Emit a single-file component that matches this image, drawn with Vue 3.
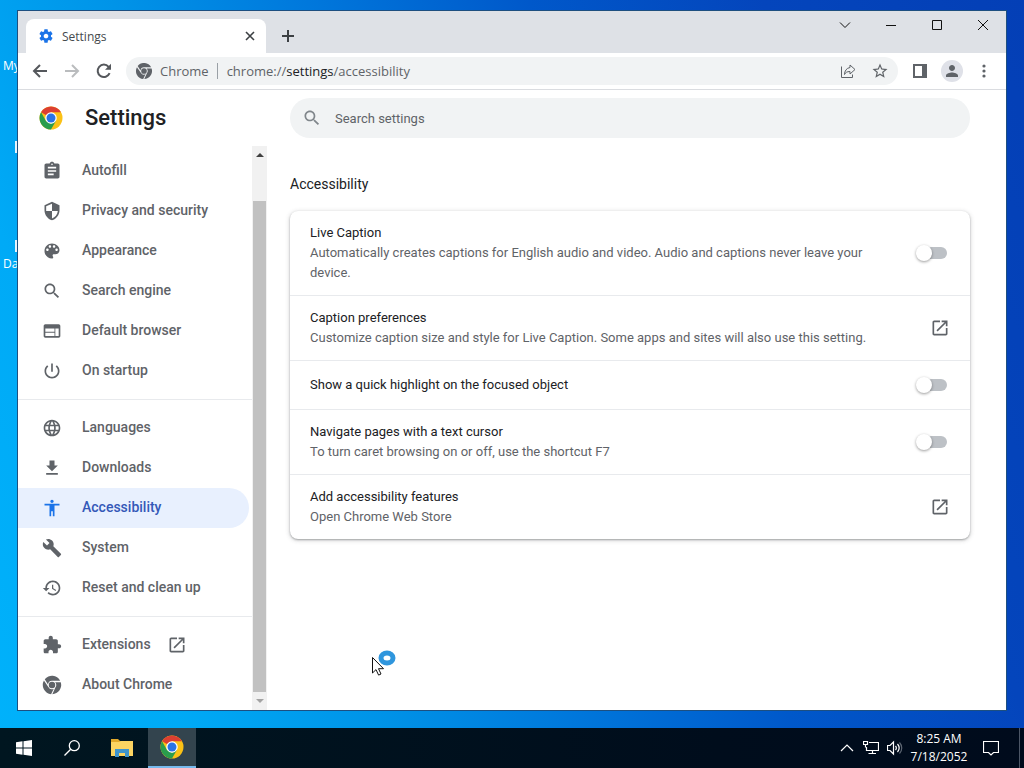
<template>
  <div class="desktop">
    <span class="desktop-label label-top">My</span>
    <span class="desktop-label label-bottom">Da</span>
    <span class="shortcut shortcut-top"></span>
    <span class="shortcut shortcut-bottom"></span>

    <div class="workspace">
      <div class="window">
        <header class="tab-strip">
          <div class="tab">
            <svg class="tab-icon" viewBox="0 0 24 24">
              <path :d="icons.gear" />
            </svg>
            <span class="tab-title">Settings</span>
            <button class="tab-close" aria-label="Close tab">
              <svg viewBox="0 0 10 10"><path d="M1 1l8 8M9 1l-8 8" /></svg>
            </button>
          </div>
          <button class="new-tab" aria-label="New tab">
            <svg viewBox="0 0 14 14"><path d="M7 1v12M1 7h12" /></svg>
          </button>
          <div class="caption-buttons">
            <button v-for="button in captionButtons" :key="button.label" :aria-label="button.label">
              <svg viewBox="0 0 12 12"><path :d="button.path" /></svg>
            </button>
          </div>
        </header>

        <div class="toolbar">
          <button class="nav-btn" aria-label="Back">
            <svg viewBox="0 0 16 16"><path d="M15 8H2M8 2L2 8l6 6" /></svg>
          </button>
          <button class="nav-btn muted" aria-label="Forward">
            <svg viewBox="0 0 16 16"><path d="M1 8h13M8 2l6 6-6 6" /></svg>
          </button>
          <button class="nav-btn" aria-label="Reload">
            <svg viewBox="0 0 16 16">
              <path d="M13.6 10.2A6.2 6.2 0 1 1 12.6 3.8L14 5.4" />
              <path class="solid" d="M15 .8v6H9z" />
            </svg>
          </button>
          <div class="omnibox">
            <svg class="site-icon" viewBox="1 1 22 22"><path :d="icons.chrome" /></svg>
            <span class="site-name">Chrome</span>
            <span class="url">chrome://<b>settings</b>/accessibility</span>
            <button class="box-btn" aria-label="Share this page">
              <svg viewBox="0 0 16 16">
                <path d="M1.5 3.5v11h11v-3" />
                <path d="M10 2l5 4.5-5 4.5V8.5c-3 0-4.500 1-5.500 3 0-3.500 2-6.500 5.500-7z" />
              </svg>
            </button>
            <button class="box-btn star" aria-label="Bookmark this tab">
              <svg viewBox="0 0 24 24"><path :d="icons.star" /></svg>
            </button>
          </div>
          <button class="tool-btn" aria-label="Side panel">
            <svg viewBox="0 0 14 14"><path d="M0 0h14v14H0zM2 2v10h7V2z" fill-rule="evenodd" /></svg>
          </button>
          <button class="tool-btn avatar" aria-label="Profile">
            <svg viewBox="4 4 16 16"><path :d="icons.person" /></svg>
          </button>
          <button class="tool-btn" aria-label="Menu">
            <svg viewBox="0 0 14 14">
              <circle cx="7" cy="2" r="1.6" /><circle cx="7" cy="7" r="1.6" /><circle cx="7" cy="12" r="1.6" />
            </svg>
          </button>
        </div>

        <div class="settings-header">
          <div class="brand">
            <svg class="chrome-logo" viewBox="0 0 48 48">
              <circle cx="24" cy="24" r="23" fill="#fbc116" />
              <path d="M24 24L4.1 12.5A23 23 0 0 1 43.9 12.5H24z" fill="#dc3f31" />
              <path d="M4.1 12.5A23 23 0 0 0 24 47l10-17.3L24 35.5l-10-5.700z" fill="#2a9d4d" />
              <circle cx="24" cy="24" r="11.5" fill="#fff" />
              <circle cx="24" cy="24" r="9" fill="#2a73e5" />
            </svg>
            <h1>Settings</h1>
          </div>
          <label class="search">
            <svg viewBox="0 0 24 24"><path :d="icons.search" /></svg>
            <input type="text" v-model="query" placeholder="Search settings" aria-label="Search settings" />
          </label>
        </div>

        <div class="content">
          <nav class="sidebar">
            <div class="menu">
              <div v-for="(group, index) in menuGroups" :key="index" class="menu-group">
                <a
                  v-for="item in group"
                  :key="item.label"
                  href="#"
                  class="menu-item"
                  :class="{ selected: item.label === selected }"
                  @click.prevent="selected = item.label"
                >
                  <svg viewBox="0 0 24 24"><path :d="icons[item.icon]" /></svg>
                  <span>{{ item.label }}</span>
                  <svg v-if="item.external" viewBox="0 0 24 24"><path :d="icons.launch" /></svg>
                </a>
              </div>
            </div>
            <div class="scrollbar">
              <svg class="arrow up" viewBox="0 0 8 4"><path d="M0 4l4-4 4 4z" /></svg>
              <div class="track"><div class="thumb"></div></div>
              <svg class="arrow down" viewBox="0 0 8 4"><path d="M0 0l4 4 4-4z" /></svg>
            </div>
          </nav>

          <main class="page">
            <h2>Accessibility</h2>
            <div class="card">
              <component
                :is="option.external ? 'a' : 'label'"
                v-for="option in options"
                :key="option.title"
                :href="option.external ? '#' : null"
                class="option"
              >
                <span class="option-text">
                  <span class="option-title">{{ option.title }}</span>
                  <span v-if="option.detail" class="option-detail">{{ option.detail }}</span>
                </span>
                <svg v-if="option.external" class="launch" viewBox="0 0 24 24"><path :d="icons.launch" /></svg>
                <input v-else type="checkbox" class="toggle" v-model="option.on" />
              </component>
            </div>
          </main>
        </div>
      </div>
    </div>

    <footer class="taskbar">
      <button class="task" aria-label="Start">
        <svg class="start-icon" viewBox="0 0 16 16">
          <path d="M0 2.2l6.500-.9v6.200H0zM7.500 1.200L16 0v7.500H7.500zM0 8.500h6.500v6.200L0 13.800zM7.500 8.500H16V16l-8.500-1.200z" />
        </svg>
      </button>
      <button class="task" aria-label="Search">
        <svg class="find-icon" viewBox="0 0 16 16"><circle cx="10.3" cy="5.7" r="5" /><path d="M6.7 9.3L.5 15.5" /></svg>
      </button>
      <button class="task spaced" aria-label="File Explorer">
        <svg class="folder-icon" viewBox="0 0 22 18">
          <path d="M0 0h7l2 2h13v14H0z" fill="#e2a92b" />
          <path d="M0 3h8l2-1h12v15H0z" fill="#fcd462" />
          <path d="M4 10h14v8h-4v-4H8v4H4z" fill="#3f94cc" />
        </svg>
      </button>
      <button class="task spaced active" aria-label="Google Chrome">
        <svg class="chrome-logo" viewBox="0 0 48 48">
          <circle cx="24" cy="24" r="23" fill="#fbc116" />
          <path d="M24 24L4.1 12.5A23 23 0 0 1 43.9 12.5H24z" fill="#dc3f31" />
          <path d="M4.1 12.5A23 23 0 0 0 24 47l10-17.3L24 35.5l-10-5.700z" fill="#2a9d4d" />
          <circle cx="24" cy="24" r="11.5" fill="#fff" />
          <circle cx="24" cy="24" r="9" fill="#2a73e5" />
        </svg>
      </button>
      <div class="tray">
        <button class="tray-btn" aria-label="Show hidden icons">
          <svg viewBox="0 0 16 16"><path d="M2 11l6-6 6 6" /></svg>
        </button>
        <button class="tray-btn" aria-label="Network">
          <svg viewBox="0 0 16 16">
            <path d="M6 2.5h9.500v8H3.500V7M9.500 10.500v3M5.500 13.500h7.500M.5 1.500h4v3h-4zM2.500 4.500v3" />
          </svg>
        </button>
        <button class="tray-btn" aria-label="Volume">
          <svg viewBox="0 0 16 16">
            <path d="M.5 5.500H3l3.500-3.500v12L3 10.500H.5zM8.500 6c1 1.200 1 2.800 0 4M10.500 4c2 2.400 2 5.600 0 8" />
            <path class="faint" d="M12.500 2.500c3 3.200 3 7.800 0 11" />
          </svg>
        </button>
        <div class="clock">
          <span>8:25 AM</span>
          <span>7/18/2052</span>
        </div>
        <button class="tray-btn notifications" aria-label="Notifications">
          <svg viewBox="0 0 16 16"><path d="M.5 1.500h15v11h-5L8 15l-2.500-2.500h-5z" /></svg>
        </button>
      </div>
    </footer>

    <svg class="pointer" viewBox="0 0 28 30">
      <ellipse cx="16" cy="10" rx="6" ry="5" class="ring" />
      <path class="arrow-shape" d="M1.500 9.500v15.500l3.500-3.400 2.600 5.500 2.400-1.100-2.500-5.300h5z" />
    </svg>
  </div>
</template>

<script setup>
import { ref } from 'vue';

const query = ref('');
const selected = ref('Accessibility');

const icons = {
  gear: 'M19.430 12.980c.04-.32.07-.64.07-.98s-.03-.66-.07-.98l2.110-1.650c.19-.15.24-.42.12-.64l-2-3.460c-.12-.22-.39-.3-.61-.22l-2.490 1c-.52-.4-1.080-.73-1.690-.98l-.38-2.650C14.460 2.180 14.250 2 14 2h-4c-.25 0-.46.18-.49.42l-.38 2.650c-.61.25-1.170.59-1.690.98l-2.490-1c-.23-.09-.49 0-.61.22l-2 3.460c-.13.22-.07.49.12.64l2.110 1.650c-.04.32-.07.65-.07.98s.03.66.07.98l-2.110 1.650c-.19.15-.24.42-.12.64l2 3.460c.12.22.39.3.61.22l2.490-1c.52.4 1.080.73 1.690.98l.38 2.650c.03.24.24.42.49.42h4c.25 0 .46-.18.49-.42l.38-2.650c.61-.25 1.170-.59 1.690-.98l2.490 1c.23.09.49 0 .61-.22l2-3.460c.12-.22.07-.49-.12-.64l-2.110-1.650zM12 15.500c-1.930 0-3.500-1.570-3.500-3.500s1.570-3.500 3.500-3.500 3.500 1.570 3.500 3.500-1.570 3.500-3.500 3.500z',
  star: 'M22 9.240l-7.190-.62L12 2 9.190 8.630 2 9.240l5.460 4.730L5.820 21 12 17.270 18.180 21l-1.630-7.030L22 9.240zM12 15.400l-3.760 2.270 1-4.280-3.320-2.880 4.380-.38L12 6.100l1.710 4.040 4.380.38-3.320 2.880 1 4.280L12 15.400z',
  person: 'M12 12c2.210 0 4-1.790 4-4s-1.790-4-4-4-4 1.790-4 4 1.790 4 4 4zm0 2c-2.670 0-8 1.340-8 4v2h16v-2c0-2.660-5.330-4-8-4z',
  search: 'M15.500 14h-.79l-.28-.27C15.410 12.590 16 11.110 16 9.500 16 5.910 13.090 3 9.500 3S3 5.910 3 9.500 5.910 16 9.500 16c1.610 0 3.090-.59 4.230-1.570l.27.28v.79l5 4.990L20.490 19l-4.990-5zm-6 0C7.010 14 5 11.990 5 9.500S7.010 5 9.500 5 14 7.010 14 9.500 11.990 14 9.500 14z',
  autofill: 'M19 3h-4.180C14.400 1.840 13.300 1 12 1s-2.400.84-2.820 2H5c-1.100 0-2 .9-2 2v14c0 1.100.9 2 2 2h14c1.100 0 2-.9 2-2V5c0-1.100-.9-2-2-2zm-7 0c.55 0 1 .45 1 1s-.45 1-1 1-1-.45-1-1 .45-1 1-1zm2 14H7v-2h7v2zm3-4H7v-2h10v2zm0-4H7V7h10v2z',
  shield: 'M12 1L3 5v6c0 5.550 3.840 10.740 9 12 5.160-1.260 9-6.450 9-12V5l-9-4zm0 10.990h7c-.53 4.120-3.280 7.790-7 8.940V12H5V6.300l7-3.110v8.800z',
  palette: 'M12 3c-4.970 0-9 4.030-9 9s4.030 9 9 9c.83 0 1.500-.67 1.500-1.500 0-.39-.15-.74-.39-1.010-.23-.26-.38-.61-.38-.99 0-.83.67-1.500 1.500-1.500H16c2.760 0 5-2.240 5-5 0-4.420-4.030-8-9-8zm-5.500 9c-.83 0-1.500-.67-1.500-1.500S5.670 9 6.500 9 8 9.670 8 10.500 7.330 12 6.500 12zm3-4C8.670 8 8 7.330 8 6.500S8.670 5 9.500 5s1.500.67 1.500 1.500S10.330 8 9.500 8zm5 0c-.83 0-1.500-.67-1.500-1.500S13.670 5 14.500 5s1.500.67 1.500 1.500S15.330 8 14.500 8zm3 4c-.83 0-1.500-.67-1.500-1.500S16.670 9 17.500 9s1.500.67 1.500 1.500-.67 1.500-1.500 1.500z',
  browser: 'M20 4H4c-1.100 0-1.990.9-1.990 2L2 18c0 1.100.9 2 2 2h16c1.100 0 2-.9 2-2V6c0-1.100-.9-2-2-2zm-5 14H4v-4h11v4zm0-5H4V9h11v4zm5 5h-4V9h4v9z',
  power: 'M13 3h-2v10h2V3zm4.830 2.170l-1.420 1.420C17.990 7.860 19 9.810 19 12c0 3.870-3.130 7-7 7s-7-3.130-7-7c0-2.190 1.010-4.140 2.580-5.420L6.170 5.170C4.230 6.820 3 9.260 3 12c0 4.970 4.030 9 9 9s9-4.030 9-9c0-2.740-1.230-5.180-3.170-6.830z',
  globe: 'M11.990 2C6.470 2 2 6.480 2 12s4.470 10 9.990 10C17.520 22 22 17.520 22 12S17.520 2 11.990 2zm6.930 6h-2.950c-.32-1.250-.78-2.450-1.380-3.560 1.840.63 3.370 1.910 4.330 3.560zM12 4.040c.83 1.200 1.480 2.530 1.910 3.960h-3.820c.43-1.430 1.080-2.760 1.910-3.960zM4.260 14C4.100 13.360 4 12.690 4 12s.1-1.360.26-2h3.380c-.08.66-.14 1.320-.14 2s.06 1.340.14 2H4.260zm.82 2h2.950c.32 1.250.78 2.450 1.380 3.560-1.840-.63-3.370-1.900-4.330-3.560zm2.950-8H5.080c.96-1.660 2.490-2.930 4.330-3.560C8.810 5.550 8.350 6.750 8.030 8zM12 19.960c-.83-1.200-1.480-2.530-1.910-3.960h3.820c-.43 1.430-1.080 2.760-1.910 3.960zM14.340 14H9.660c-.09-.66-.16-1.320-.16-2s.07-1.350.16-2h4.680c.09.65.16 1.320.16 2s-.07 1.340-.16 2zm.25 5.560c.6-1.110 1.060-2.310 1.380-3.560h2.950c-.96 1.650-2.490 2.930-4.330 3.560zM16.360 14c.08-.66.14-1.320.14-2s-.06-1.340-.14-2h3.380c.16.64.26 1.310.26 2s-.1 1.360-.26 2h-3.380z',
  download: 'M19 9h-4V3H9v6H5l7 7 7-7zM5 18v2h14v-2H5z',
  accessibility: 'M12 2c1.100 0 2 .9 2 2s-.9 2-2 2-2-.9-2-2 .9-2 2-2zm9 7h-6v13h-2v-6h-2v6H9V9H3V7h18v2z',
  wrench: 'M22.700 19l-9.100-9.100c.9-2.300.4-5-1.500-6.900-2-2-5-2.400-7.400-1.300L9 6 6 9 1.600 4.700C.4 7.100.9 10.100 2.900 12.100c1.900 1.900 4.600 2.400 6.900 1.500l9.100 9.100c.4.4 1 .4 1.400 0l2.300-2.300c.5-.4.5-1.100.1-1.400z',
  history: 'M13 3c-4.970 0-9 4.030-9 9H1l3.890 3.890.07.14L9 12H6c0-3.870 3.130-7 7-7s7 3.130 7 7-3.130 7-7 7c-1.930 0-3.680-.79-4.940-2.060l-1.420 1.420C8.270 19.990 10.510 21 13 21c4.970 0 9-4.030 9-9s-4.030-9-9-9zm-1 5v5l4.280 2.540.72-1.210-3.500-2.080V8H12z',
  puzzle: 'M20.500 11H19V7c0-1.100-.9-2-2-2h-4V3.500C13 2.120 11.880 1 10.500 1S8 2.120 8 3.500V5H4c-1.100 0-1.990.9-1.990 2v3.800H3.500c1.490 0 2.700 1.210 2.700 2.700s-1.210 2.700-2.700 2.700H2V20c0 1.100.9 2 2 2h3.800v-1.500c0-1.490 1.210-2.700 2.700-2.700 1.490 0 2.700 1.210 2.700 2.700V22H17c1.100 0 2-.9 2-2v-4h1.500c1.380 0 2.500-1.120 2.500-2.500S21.880 11 20.500 11z',
  chrome: 'M12 6.900h9.800A11 11 0 0 0 3.300 5.200L7.200 11.400A5 5 0 0 1 12 6.900zM2.300 6.700A11 11 0 0 0 10.900 23L14.100 16.600A5 5 0 0 1 7.600 14.300zM22.500 8.600H15.700A5 5 0 0 1 16.200 14.700L12.400 23A11 11 0 0 0 22.500 8.600zM12 8.100a3.900 3.900 0 1 0 0 7.800 3.900 3.900 0 0 0 0-7.800z',
  launch: 'M19 19H5V5h7V3H5c-1.110 0-2 .9-2 2v14c0 1.100.89 2 2 2h14c1.100 0 2-.9 2-2v-7h-2v7zM14 3v2h3.590l-9.830 9.830 1.410 1.410L19 6.410V10h2V3h-7z',
};

const captionButtons = [
  { label: 'Search tabs', path: 'M1 3.500l5 5 5-5' },
  { label: 'Minimize', path: 'M1 6.500h10' },
  { label: 'Maximize', path: 'M1.500 1.500h9v9h-9z' },
  { label: 'Close', path: 'M1 1l10 10M11 1L1 11' },
];

const menuGroups = [
  [
    { label: 'Autofill', icon: 'autofill' },
    { label: 'Privacy and security', icon: 'shield' },
    { label: 'Appearance', icon: 'palette' },
    { label: 'Search engine', icon: 'search' },
    { label: 'Default browser', icon: 'browser' },
    { label: 'On startup', icon: 'power' },
  ],
  [
    { label: 'Languages', icon: 'globe' },
    { label: 'Downloads', icon: 'download' },
    { label: 'Accessibility', icon: 'accessibility' },
    { label: 'System', icon: 'wrench' },
    { label: 'Reset and clean up', icon: 'history' },
  ],
  [
    { label: 'Extensions', icon: 'puzzle', external: true },
    { label: 'About Chrome', icon: 'chrome' },
  ],
];

const options = ref([
  {
    title: 'Live Caption',
    detail: 'Automatically creates captions for English audio and video. Audio and captions never leave your device.',
    on: false,
  },
  {
    title: 'Caption preferences',
    detail: 'Customize caption size and style for Live Caption. Some apps and sites will also use this setting.',
    external: true,
  },
  { title: 'Show a quick highlight on the focused object', on: false },
  {
    title: 'Navigate pages with a text cursor',
    detail: 'To turn caret browsing on or off, use the shortcut F7',
    on: false,
  },
  { title: 'Add accessibility features', detail: 'Open Chrome Web Store', external: true },
]);
</script>

<style>
body {
  margin: 0;
}
</style>

<style scoped>
* {
  box-sizing: border-box;
}

.desktop {
  position: relative;
  display: flex;
  flex-direction: column;
  min-height: 100vh;
  overflow: hidden;
  font-family: Roboto, "Liberation Sans", sans-serif;
  background: linear-gradient(70deg, #00b2fb 0%, #00aaf6 15%, #0094e8 30%, #0078dc 45%, #0058ca 62%, #0445bc 80%, #043fb6 100%);
}

button {
  display: flex;
  align-items: center;
  justify-content: center;
  padding: 0;
  border: none;
  background: transparent;
}

a {
  color: inherit;
  text-decoration: none;
}

svg {
  flex-shrink: 0;
}

.desktop-label {
  position: absolute;
  left: 3px;
  color: #fff;
  font-family: "Open Sans", sans-serif;
  font-size: 12px;
  line-height: 16px;
}

.label-top {
  top: 58px;
}

.label-bottom {
  top: 256px;
}

.shortcut {
  position: absolute;
  left: 15px;
  width: 8px;
  height: 12px;
  background: #e8f4fc;
}

.shortcut-top {
  top: 141px;
}

.shortcut-bottom {
  top: 240px;
}

.workspace {
  display: flex;
  flex: 1;
  padding: 10px 17px 17px;
}

.window {
  position: relative;
  display: flex;
  flex: 1;
  flex-direction: column;
  min-width: 0;
  border: 1px solid #1d4f80;
  background: #fff;
}

.tab-strip {
  display: flex;
  align-items: flex-end;
  height: 42px;
  padding-left: 8px;
  background: #dee1e6;
}

.tab {
  display: flex;
  align-items: center;
  width: 240px;
  height: 34px;
  padding: 0 10px 0 12px;
  border-radius: 8px 8px 0 0;
  background: #fff;
}

.tab-icon {
  width: 16px;
  height: 16px;
  fill: #1a73e8;
}

.tab-title {
  flex: 1;
  margin-left: 8px;
  color: #45494d;
  font-family: "Open Sans", sans-serif;
  font-size: 12px;
}

.tab-close {
  width: 12px;
  height: 16px;
}

.tab-close svg {
  width: 10px;
  height: 10px;
  stroke: #3c4043;
  stroke-width: 1.6;
}

.new-tab {
  width: 28px;
  height: 34px;
  margin-left: 8px;
}

.new-tab svg {
  width: 14px;
  height: 14px;
  stroke: #3c4043;
  stroke-width: 2;
}

.caption-buttons {
  display: flex;
  align-self: flex-start;
  margin-left: auto;
}

.caption-buttons button {
  width: 46px;
  height: 28px;
}

.caption-buttons svg {
  width: 12px;
  height: 12px;
  fill: none;
  stroke: #111;
}

.toolbar {
  display: flex;
  align-items: center;
  height: 37px;
  padding: 0 6px;
  border-bottom: 1px solid #dadce0;
}

.nav-btn {
  width: 32px;
  height: 32px;
}

.nav-btn svg {
  width: 16px;
  height: 16px;
  fill: none;
  stroke: #55585c;
  stroke-width: 2;
}

.nav-btn .solid {
  fill: #55585c;
  stroke: none;
}

.muted svg {
  stroke: #babcbe;
}

.omnibox {
  display: flex;
  flex: 1;
  align-items: center;
  height: 28px;
  margin: 0 6px;
  padding: 0 2px 0 10px;
  border-radius: 14px;
  background: #f1f3f4;
  color: #5f6368;
  font-family: "Open Sans", sans-serif;
  font-size: 13px;
  line-height: 16px;
}

.site-icon {
  width: 16px;
  height: 16px;
  fill: #5f6368;
}

.site-name {
  margin: 0 9px 0 8px;
  padding-right: 8px;
  border-right: 1px solid #9aa0a6;
}

.url {
  flex: 1;
}

.url b {
  color: #202124;
  font-weight: 400;
}

.box-btn {
  width: 32px;
  height: 28px;
}

.box-btn svg {
  width: 16px;
  height: 16px;
  fill: none;
  stroke: #5f6368;
  stroke-width: 1;
}

.star svg {
  width: 18px;
  height: 18px;
  fill: #5f6368;
  stroke: none;
}

.tool-btn {
  width: 22px;
  height: 22px;
  margin: 0 5px;
}

.tool-btn svg {
  width: 14px;
  height: 14px;
  fill: #5f6368;
}

.avatar {
  border-radius: 50%;
  background: #dfe1e8;
}

.avatar svg {
  width: 12px;
  height: 12px;
}

.settings-header {
  display: flex;
  align-items: center;
  height: 56px;
  padding-right: 36px;
}

.brand {
  display: flex;
  align-items: center;
  gap: 22px;
  width: 272px;
  padding-left: 21px;
}

.chrome-logo {
  width: 24px;
  height: 24px;
}

h1 {
  margin: 0;
  color: #202124;
  font-size: 22px;
  font-weight: 500;
  line-height: 24px;
}

.search {
  display: flex;
  flex: 1;
  align-items: center;
  gap: 13px;
  height: 40px;
  padding: 0 12px;
  border-radius: 20px;
  background: #f1f3f4;
}

.search svg {
  width: 20px;
  height: 20px;
  fill: #80868b;
}

.search input {
  flex: 1;
  padding: 0;
  border: none;
  outline: none;
  background: transparent;
  color: #202124;
  font-family: inherit;
  font-size: 13px;
}

.search input::placeholder {
  color: #5f6368;
  opacity: 1;
}

.content {
  display: flex;
  flex: 1;
}

.sidebar {
  display: flex;
  width: 250px;
}

.menu {
  flex: 1;
  padding: 5px 0;
}

.menu-group + .menu-group {
  margin-top: 8px;
  padding-top: 8px;
  border-top: 1px solid #e8eaed;
}

.menu-item {
  display: flex;
  align-items: center;
  gap: 20px;
  height: 40px;
  margin-right: 3px;
  padding-left: 24px;
  border-radius: 0 20px 20px 0;
  color: #5f6368;
  font-size: 14px;
  font-weight: 500;
  line-height: 20px;
}

.menu-item svg {
  width: 20px;
  height: 20px;
  fill: currentColor;
}

.menu-item span {
  padding-bottom: 2px;
}

.menu-item span + svg {
  margin-left: -4px;
}

.selected {
  background: #e8f0fe;
  color: #3458b8;
}

.selected svg {
  fill: #1a73e8;
}

.scrollbar {
  display: flex;
  flex-direction: column;
  align-items: center;
  width: 15px;
  margin-right: 1px;
  background: #f1f1f1;
}

.arrow {
  width: 8px;
  height: 4px;
  margin: 7px 0;
  fill: #404040;
}

.arrow.down {
  fill: #a3a3a3;
}

.track {
  display: flex;
  flex: 1;
  align-items: flex-end;
}

.thumb {
  width: 13px;
  height: 93%;
  background: #c1c1c1;
}

.page {
  flex: 1;
  padding: 28px 36px 0 22px;
}

h2 {
  margin: 0 0 17px;
  color: #202124;
  font-size: 14px;
  font-weight: 400;
  line-height: 20px;
}

.card {
  border-radius: 8px;
  box-shadow: 0 1px 2px rgba(60, 64, 67, 0.4), 0 1px 4px 1px rgba(60, 64, 67, 0.16);
}

.option {
  display: flex;
  align-items: center;
  justify-content: space-between;
  box-sizing: content-box;
  min-height: 24px;
  padding: 12px 20px;
  font-size: 13px;
  line-height: 20px;
}

.option + .option {
  border-top: 1px solid #e8eaed;
}

.option-text {
  flex: 1;
  max-width: 580px;
}

.option-title,
.option-detail {
  display: block;
}

.option-title {
  color: #202124;
}

.option-detail {
  color: #5f6368;
}

.launch {
  width: 20px;
  height: 20px;
  fill: #5f6368;
}

.toggle {
  position: relative;
  width: 34px;
  height: 16px;
  margin: 0;
  appearance: none;
}

.toggle::before {
  content: "";
  position: absolute;
  top: 2px;
  left: 3px;
  width: 28px;
  height: 12px;
  border-radius: 6px;
  background: #bdc1c6;
}

.toggle::after {
  content: "";
  position: absolute;
  top: 0;
  left: 0;
  width: 16px;
  height: 16px;
  border-radius: 50%;
  background: #fff;
  box-shadow: 0 1px 3px rgba(0, 0, 0, 0.4);
}

.toggle:checked::before {
  background: #8ab4f8;
}

.toggle:checked::after {
  left: 18px;
  background: #1a73e8;
}

.taskbar {
  display: flex;
  height: 40px;
  background: linear-gradient(90deg, #001620, #000d1c 70%, #000b1c);
}

.task {
  width: 48px;
}

.spaced {
  margin-left: 2px;
}

.active {
  border-bottom: 2px solid #76b9ed;
  background: #33444e;
}

.start-icon {
  width: 16px;
  height: 16px;
  fill: #fff;
}

.find-icon {
  width: 16px;
  height: 16px;
  fill: none;
  stroke: #fff;
  stroke-width: 1.3;
}

.folder-icon {
  width: 22px;
  height: 18px;
}

.tray {
  display: flex;
  align-items: center;
  margin-left: auto;
  margin-right: 4px;
  border-right: 1px solid #4c5666;
}

.tray-btn {
  width: 24px;
  height: 40px;
}

.tray-btn svg {
  width: 16px;
  height: 16px;
  fill: none;
  stroke: #fff;
  stroke-width: 1.2;
}

.tray-btn .faint {
  stroke: #5d6672;
}

.clock {
  display: flex;
  flex-direction: column;
  align-items: center;
  width: 64px;
  color: #fff;
  font-family: "Open Sans", sans-serif;
  font-size: 12px;
  line-height: 18px;
}

.notifications {
  width: 48px;
  padding-right: 8px;
}

.pointer {
  position: absolute;
  top: 648px;
  left: 371px;
  width: 28px;
  height: 30px;
  pointer-events: none;
}

.ring {
  fill: #fff;
  stroke: #2f96dd;
  stroke-width: 5;
}

.arrow-shape {
  fill: #fff;
  stroke: #111;
}
</style>
